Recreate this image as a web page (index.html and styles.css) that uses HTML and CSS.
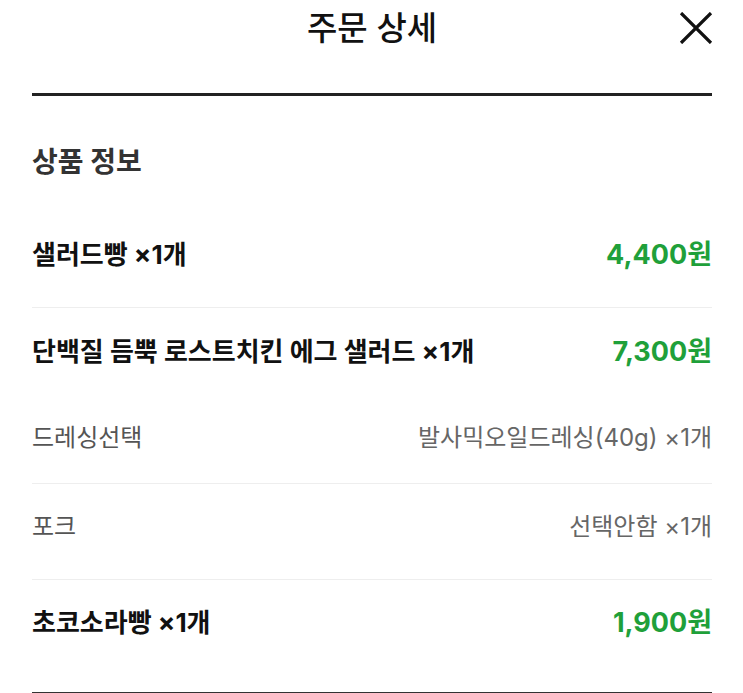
FILE: index.html
```html
<!DOCTYPE html>
<html lang="ko">
<head>
<meta charset="utf-8">
<title>주문 상세</title>
<link rel="stylesheet" href="styles.css">
</head>
<body>
<div class="page">
  <header class="header">
    <div class="header-bar">
      <span></span>
      <h1 class="title">주문 상세</h1>
      <button class="close" aria-label="닫기">
        <svg width="34" height="32" viewBox="0 0 34 32"><path d="M2 1 L32 31 M32 1 L2 31" stroke="#111" stroke-width="3.2" fill="none"/></svg>
      </button>
    </div>
  </header>
  <h2 class="section-title">상품 정보</h2>
  <ul class="list">
    <li class="row product first divided">
      <span class="name">샐러드빵 ×1개</span>
      <span class="price">4,400원</span>
    </li>
    <li class="row product second">
      <span class="name">단백질 듬뿍 로스트치킨 에그 샐러드 ×1개</span>
      <span class="price">7,300원</span>
    </li>
    <li class="row option opt-a divided">
      <span class="opt-name">드레싱선택</span>
      <span class="opt-value">발사믹오일드레싱(40g) ×1개</span>
    </li>
    <li class="row option opt-b divided">
      <span class="opt-name">포크</span>
      <span class="opt-value">선택안함 ×1개</span>
    </li>
    <li class="row product last">
      <span class="name">초코소라빵 ×1개</span>
      <span class="price">1,900원</span>
    </li>
  </ul>
</div>
</body>
</html>
```

FILE: styles.css
```css
* { box-sizing: border-box; }
html, body {
  margin: 0;
  padding: 0;
  background: #fff;
}
body {
  font-family: Inter, "Noto Sans CJK KR", sans-serif;
  color: #111;
  overflow: hidden;
}
.page {
  width: 680px;
  margin-left: 32px;
}
.header {
  height: 96px;
  border-bottom: 3px solid #222;
}
.header-bar {
  height: 56px;
  display: grid;
  grid-template-columns: 1fr auto 1fr;
  align-items: center;
}
.title {
  margin: 0;
  font-size: 33px;
  font-weight: 500;
  line-height: 40px;
  color: #111;
}
.close {
  justify-self: end;
  margin-right: -1px;
  padding: 0;
  border: 0;
  background: none;
  width: 34px;
  height: 32px;
  display: flex;
}
.section-title {
  margin: 51px 0 0;
  font-size: 28px;
  line-height: 30px;
  font-weight: 700;
  color: #333;
}
.list {
  list-style: none;
  margin: 0;
  padding: 0;
}
.row {
  display: flex;
  justify-content: space-between;
  align-items: center;
}
.divided {
  border-bottom: 1px solid #eeeeee;
}
.product .name {
  font-size: 26px;
  font-weight: 700;
  line-height: 30px;
  color: #111;
}
.price {
  font-size: 27px;
  font-weight: 700;
  line-height: 30px;
  color: #1fa03a;
}
.opt-name {
  font-size: 24px;
  line-height: 28px;
  color: #555;
}
.opt-value {
  font-size: 24px;
  line-height: 28px;
  color: #666;
}
.first { padding: 63px 0 37px; }
.second { padding: 29px 0 0; }
.opt-a { padding: 57px 0 31px; }
.opt-b { padding: 29px 0 38px; }
.last {
  padding: 28px 0 54px;
  border-bottom: 3px solid #333;
}
```
